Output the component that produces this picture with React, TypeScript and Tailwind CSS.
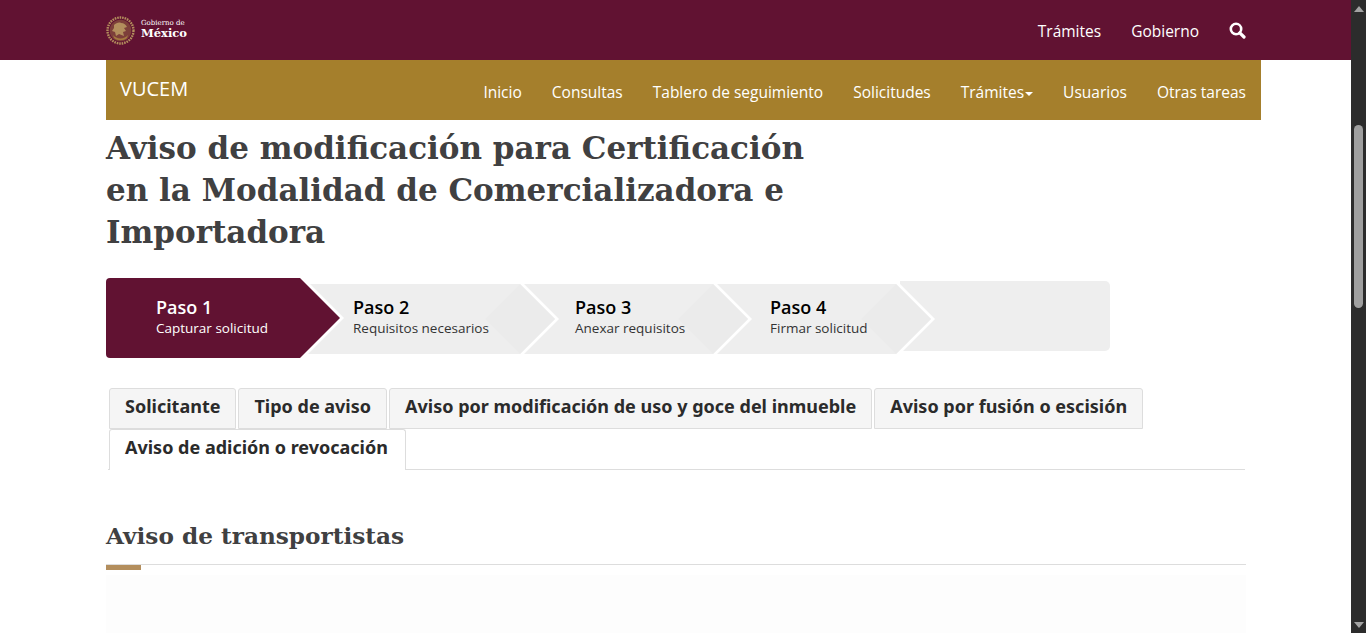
const MAIN_LINKS = ["Inicio", "Consultas", "Tablero de seguimiento", "Solicitudes"];
const TABS = ["Solicitante", "Tipo de aviso", "Aviso por modificación de uso y goce del inmueble", "Aviso por fusión o escisión"];
const SERIF = "font-['DejaVu_Serif',serif]";

function Emblem() {
  return (
    <svg width="29" height="29" viewBox="0 0 29 29" className="shrink-0">
      <circle cx="14.5" cy="14.5" r="13" fill="none" stroke="#b38e5d" strokeWidth="2.4" strokeDasharray="1.6 0.9" />
      <circle cx="14.5" cy="14.5" r="10.8" fill="#7d3f3a" />
      <path d="M8 9c2-2 5-3 7-2 3 0 5 2 6 4l-3 1 2 3-3 1 1 4-5-2-3 2-1-4-3-1 2-3z" fill="#b38e5d" />
      <path d="M7 19c3 4 11 5 15 0l-1 3c-3 3-10 3-13 0z" fill="#a5793f" />
    </svg>
  );
}

function SearchIcon() {
  return (
    <svg width="17" height="17" viewBox="0 0 17 17" className="mb-[3px] shrink-0">
      <circle cx="7" cy="7" r="5.2" fill="none" stroke="#ffffff" strokeWidth="2.6" />
      <path d="M10.8 10.8L15 15" stroke="#ffffff" strokeWidth="3.2" strokeLinecap="round" />
    </svg>
  );
}

function Chevron({ width, height, tip, fill, round }: { width: number; height: number; tip: number; fill: string; round?: boolean }) {
  const mid = height / 2;
  const edge = width - tip - 5;
  const body = round
    ? `M4 0H${edge}L${edge + tip} ${mid}L${edge} ${height}H4Q0 ${height} 0 ${height - 4}V4Q0 0 4 0Z`
    : `M0 0H${edge}L${edge + tip} ${mid}L${edge} ${height}H0Z`;
  return (
    <svg width={width} height={height} viewBox={`0 0 ${width} ${height}`} className="absolute left-0 top-0">
      <path d={`M${edge + 4} 0L${edge + tip + 4} ${mid}L${edge + 4} ${height}H${edge}V0Z`} fill="#ffffff" />
      <path d={body} fill={fill} />
      {!round && <path d={`M${edge - tip} ${mid}L${edge} 0L${edge + tip} ${mid}L${edge} ${height}Z`} fill="#ebebeb" />}
    </svg>
  );
}

function Step({ title, text, className, width, pad }: { title: string; text: string; className: string; width: number; pad: string }) {
  return (
    <li className={`relative mt-[2px] h-[70px] ${className}`} style={{ width }}>
      <Chevron width={width} height={70} tip={35} fill="#eeeeee" />
      <div className={`relative flex h-full flex-col justify-center pb-[7px] ${pad}`}>
        <span className="text-lg leading-[24px] font-semibold text-black">{title}</span>
        <span className="text-[13.5px] leading-[18px] text-[#333333]">{text}</span>
      </div>
    </li>
  );
}

export default function App() {
  return (
    <div className="flex h-[633px] overflow-hidden bg-white font-['Open_Sans',sans-serif] text-[#333333]">
      <div className="min-w-0 flex-1">
        {/* Top bar */}
        <header className="h-[60px] bg-[#611232]">
          <div className="ml-[106px] flex h-full w-[1140px] items-center justify-between">
            <div className="flex items-center gap-[6px]">
              <Emblem />
              <div className={`flex flex-col text-white ${SERIF}`}>
                <span className="text-[7px] leading-[7px]">Gobierno de</span>
                <span className="text-[11.5px] leading-[13px] font-bold">México</span>
              </div>
            </div>
            <nav className="flex items-center gap-[30px] pt-[4px] text-[15.5px] text-white">
              <a>Trámites</a>
              <a>Gobierno</a>
              <SearchIcon />
            </nav>
          </div>
        </header>

        <div className="ml-[106px] w-[1140px]">
          {/* VUCEM bar */}
          <div className="flex h-[60px] w-[1155px] justify-between bg-[#a57f2c] pl-[14px] pr-[15px] text-white">
            <span className="pt-[15px] text-xl leading-[28px]">VUCEM</span>
            <nav className="flex items-start gap-[30px] pt-[21px] text-[15.5px] leading-[22px]">
              {MAIN_LINKS.map((link) => (
                <a key={link}>{link}</a>
              ))}
              <a className="flex items-center gap-px">
                Trámites
                <span className="mt-[3px] border-x-[4px] border-t-[4px] border-x-transparent border-t-white" />
              </a>
              <a>Usuarios</a>
              <a>Otras tareas</a>
            </nav>
          </div>

          <h1 className={`mt-[7px] w-[740px] text-[31px] leading-[42px] font-bold text-[#404041] ${SERIF}`}>
            Aviso de modificación para Certificación en la Modalidad de Comercializadora e Importadora
          </h1>

          {/* Steps */}
          <ol className="mt-[25px] flex h-[80px] items-center">
            <li className="relative z-40 h-[80px] w-[239px]">
              <Chevron width={239} height={80} tip={40} fill="#611232" round />
              <div className="relative flex h-full flex-col justify-center pb-[4px] pl-[50px] text-white">
                <span className="text-lg leading-[24px] font-semibold">Paso 1</span>
                <span className="text-[13.5px] leading-[18px]">Capturar solicitud</span>
              </div>
            </li>
            <Step title="Paso 2" text="Requisitos necesarios" className="z-30 -ml-[45px]" width={260} pad="pl-[53px]" />
            <Step title="Paso 3" text="Anexar requisitos" className="z-20 -ml-[40px]" width={233} pad="pl-[55px]" />
            <Step title="Paso 4" text="Firmar solicitud" className="z-10 -ml-[36px]" width={219} pad="pl-[53px]" />
            <li className="-ml-[36px] mb-[4px] h-[70px] w-[210px] rounded-r-[5px] bg-[#eeeeee]" />
          </ol>

          {/* Tabs */}
          <div className="mt-[30px] ml-[2px] w-[1137px] border-b border-[#dddddd]">
            <ul className="flex flex-wrap gap-x-[2px] pl-px font-['Noto_Sans',sans-serif] text-lg font-bold text-[#2b2b2b]">
              {TABS.map((tab) => (
                <li key={tab} className="h-[41px] rounded-t-[3px] border border-[#dddddd] bg-[#f5f5f5] px-[15px] leading-[35px]">
                  {tab}
                </li>
              ))}
              <li className="-mb-px h-[41px] rounded-t-[3px] border-x border-t border-[#dddddd] bg-white pr-[17px] pl-[15px] leading-[35px]">
                Aviso de adición o revocación
              </li>
            </ul>
          </div>

          {/* Section */}
          <h2 className={`mt-[49px] text-[23.2px] leading-[34px] font-bold text-[#404041] ${SERIF}`}>Aviso de transportistas</h2>
          <div className="mt-[11px] border-t border-[#dddddd]">
            <div className="h-[5px] w-[35px] bg-[#b38e5d]" />
          </div>
          <div className="mt-[5px] h-[70px] bg-[#fdfdfd]" />
        </div>
      </div>

      {/* Scrollbar */}
      <aside className="relative w-[15px] shrink-0 bg-[#2c2c2c]">
        <span className="absolute left-[3px] top-[6px] border-x-[5px] border-b-[6px] border-x-transparent border-b-[#a3a3a3]" />
        <div className="absolute left-[3px] top-[125px] h-[183px] w-[9px] rounded-[5px] bg-[#9f9f9f]" />
        <span className="absolute bottom-[5px] left-[3px] border-x-[5px] border-t-[6px] border-x-transparent border-t-[#a3a3a3]" />
      </aside>
    </div>
  );
}
